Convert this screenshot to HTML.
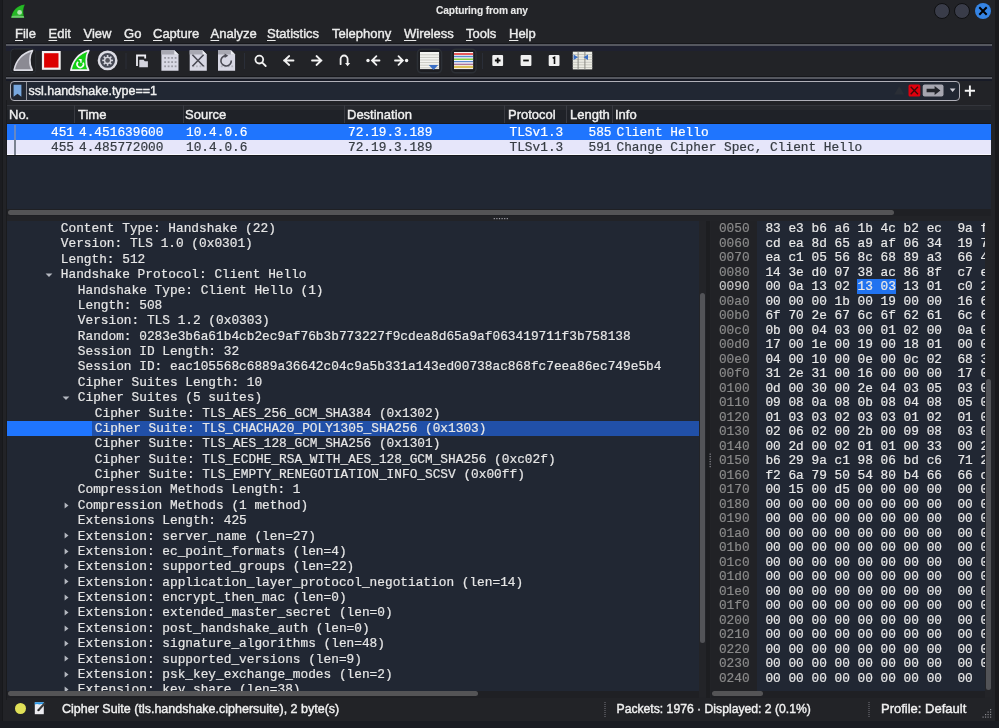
<!DOCTYPE html>
<html><head><meta charset="utf-8">
<style>
*{margin:0;padding:0;box-sizing:border-box}
html,body{width:999px;height:728px;overflow:hidden;background:#222327}
body{position:relative;will-change:transform;font-family:"Liberation Sans",sans-serif;color:#ececec;-webkit-text-stroke:0.4px currentColor}
.a{position:absolute}
.mono{font-family:"Liberation Mono",monospace;font-size:12.8px;white-space:pre;-webkit-text-stroke:0.2px currentColor}
.sans{font-family:"Liberation Sans",sans-serif;white-space:pre}
.menu span{position:absolute;top:26px;font-size:13px;line-height:16px}
.menu u{text-decoration:underline;text-decoration-thickness:1px;text-underline-offset:1.5px}
.hdr{position:absolute;top:107.4px;font-size:13px;line-height:16px;color:#f0f0f0}
.div{position:absolute;top:105px;width:1px;height:18px;background:#393b42}
.row{position:absolute;left:7px;width:984px;height:15px}
.pl{position:absolute;top:0;line-height:15px}
.tr{position:absolute;left:0;height:15.35px;line-height:15.35px}
.hx{position:absolute;left:0;height:14.51px;line-height:14.51px}
</style></head><body>
<!-- borders -->
<div class="a" style="left:0;top:0;width:2.3px;height:728px;background:#1b1c20"></div>
<div class="a" style="left:2.3px;top:0;width:0.8px;height:728px;background:#17181b"></div>
<div class="a" style="left:6.3px;top:100px;width:0.8px;height:600px;background:#1a1b1e"></div>
<div class="a" style="left:995px;top:0;width:4px;height:728px;background:#19191c"></div>

<!-- title -->
<div id="title" class="a sans" style="left:436px;top:4.2px;font-size:10.2px;font-weight:bold;line-height:14px;letter-spacing:-0.12px;-webkit-text-stroke:0.1px currentColor;color:#e8e8e8">Capturing from any</div>
<div class="a" style="left:934px;top:3px;width:16px;height:16px;border-radius:50%;background:#393c49;border:1.8px solid #0f1012"></div>
<div class="a" style="left:954px;top:3px;width:16px;height:16px;border-radius:50%;background:#393c49;border:1.8px solid #0f1012"></div>
<div class="a" style="left:975px;top:3px;width:16px;height:16px;border-radius:50%;background:#3584e4"></div>

<!-- menu -->
<div class="menu">
<span style="left:15px"><u>F</u>ile</span>
<span style="left:48.5px"><u>E</u>dit</span>
<span style="left:83.5px"><u>V</u>iew</span>
<span style="left:124px"><u>G</u>o</span>
<span style="left:153px"><u>C</u>apture</span>
<span style="left:210.5px"><u>A</u>nalyze</span>
<span style="left:267px"><u>S</u>tatistics</span>
<span style="left:332px">Telephon<u>y</u></span>
<span style="left:404px"><u>W</u>ireless</span>
<span style="left:466px"><u>T</u>ools</span>
<span style="left:509px"><u>H</u>elp</span>
</div>
<div class="a" style="left:6px;top:43px;width:986px;height:1px;background:#17181c"></div>
<div class="a" style="left:6px;top:44px;width:986px;height:2px;background:#55575f"></div>
<div class="a" style="left:6px;top:46px;width:986px;height:4.5px;background:#1f2130"></div>

<!-- toolbar -->
<svg class="a" style="left:0;top:46px" width="999" height="31" viewBox="0 46 999 31">
<!-- 1 frame + gray fin -->
<rect x="10.7" y="49" width="25" height="24" rx="3.5" fill="#1d1e22" stroke="#2c3036" stroke-width="1"/>
<path d="M14.1 70.1 C15.8 61 22 52.8 32.5 50.6 C29.6 55 28.5 64 32.4 70.1 Z" fill="#8b8a93" stroke="#dcdce4" stroke-width="1.6" stroke-linejoin="round"/>
<!-- 2 red stop -->
<rect x="43" y="52.1" width="16.6" height="16.6" fill="#dc0000" stroke="#f2f2f2" stroke-width="2.2"/>
<!-- 3 green fin with reload -->
<path d="M70.9 70.2 C72.6 61 78.8 52.8 88.8 50.6 C86 55 85 64 88.6 70.2 Z" fill="#12d012" stroke="#f0eef4" stroke-width="1.7" stroke-linejoin="round"/>
<path d="M78.2 61.8 A3.2 3.2 0 1 0 83 62.6" fill="none" stroke="#f8f8f8" stroke-width="1.6"/>
<path d="M78.4 59 L81.4 59 L81.4 62.6 Z" fill="#f8f8f8"/>
<rect x="80.4" y="59" width="1.1" height="4" fill="#f8f8f8"/>
<!-- 4 gear -->
<circle cx="107.6" cy="60.4" r="8.7" fill="#464955" stroke="#dcdce4" stroke-width="2.5"/>
<g fill="#d4d4dc">
<circle cx="107.6" cy="60.4" r="3.7"/>
<rect x="106.8" y="55" width="1.6" height="10.8"/>
<rect x="102.2" y="59.6" width="10.8" height="1.6"/>
<rect x="106.8" y="55" width="1.6" height="10.8" transform="rotate(45 107.6 60.4)"/>
<rect x="106.8" y="55" width="1.6" height="10.8" transform="rotate(-45 107.6 60.4)"/>
</g>
<circle cx="107.6" cy="60.4" r="2.3" fill="#55565e"/>
<!-- sep -->
<rect x="125.5" y="53" width="1" height="16" fill="#2a2e38"/>
<!-- 5 open -->
<path d="M137 66 V55.5 H145.2 V58.5" fill="none" stroke="#eeeef4" stroke-width="1.8"/>
<path d="M139.3 59.8 H143.6 L144.8 61.2 H147.9 V67.3 H139.3 Z" fill="#d4d4de"/>
<!-- 6-8 docs -->
<path d="M161.4 50.2 H174.3 L178.5 54.4 V70.7 H161.4 Z" fill="#d8d8e4"/>
<path d="M161.4 50.2 H174.3 L178.5 54.4 H161.4 Z" fill="#a8a8b2"/>
<path d="M174.3 50.2 L174.3 54.4 L178.5 54.4 Z" fill="#ecedf2"/>
<g fill="#9a9aa4">
<rect x="164.2" y="57" width="1.8" height="1.8"/><rect x="167.7" y="57" width="1.8" height="1.8"/><rect x="171.2" y="57" width="1.8" height="1.8"/><rect x="174.7" y="57" width="1.8" height="1.8"/>
<rect x="164.2" y="61.2" width="1.8" height="1.8"/><rect x="167.7" y="61.2" width="1.8" height="1.8"/><rect x="171.2" y="61.2" width="1.8" height="1.8"/><rect x="174.7" y="61.2" width="1.8" height="1.8"/>
<rect x="164.2" y="65.4" width="1.8" height="1.8"/><rect x="167.7" y="65.4" width="1.8" height="1.8"/><rect x="171.2" y="65.4" width="1.8" height="1.8"/><rect x="174.7" y="65.4" width="1.8" height="1.8"/>
</g>
<path d="M189.7 50.2 H202.6 L206.8 54.4 V70.7 H189.7 Z" fill="#d8d8e4"/>
<path d="M189.7 50.2 H202.6 L206.8 54.4 H189.7 Z" fill="#a8a8b2"/>
<path d="M202.6 50.2 L202.6 54.4 L206.8 54.4 Z" fill="#ecedf2"/>
<g fill="#b4b4be">
<rect x="192.5" y="65.4" width="1.8" height="1.8"/><rect x="196" y="65.4" width="1.8" height="1.8"/><rect x="199.5" y="65.4" width="1.8" height="1.8"/><rect x="203" y="65.4" width="1.8" height="1.8"/>
</g>
<path d="M192.4 54.7 L203.6 66.2 M203.6 54.7 L192.4 66.2" stroke="#4a4a54" stroke-width="1.6"/>
<path d="M218.0 50.2 H230.9 L235.1 54.4 V70.7 H218.0 Z" fill="#d8d8e4"/>
<path d="M218.0 50.2 H230.9 L235.1 54.4 H218.0 Z" fill="#a8a8b2"/>
<path d="M230.9 50.2 L230.9 54.4 L235.1 54.4 Z" fill="#ecedf2"/>
<g fill="#b4b4be">
<rect x="220.8" y="65.4" width="1.8" height="1.8"/><rect x="224.3" y="65.4" width="1.8" height="1.8"/><rect x="227.8" y="65.4" width="1.8" height="1.8"/><rect x="231.3" y="65.4" width="1.8" height="1.8"/>
</g>
<path d="M225.6 55.6 A5.2 5.2 0 1 0 231.3 60.5" fill="none" stroke="#4a4a54" stroke-width="1.6"/>
<path d="M224.6 53.6 L228.3 55.8 L224.6 58.1 Z" fill="#4a4a54"/>
<!-- sep -->
<rect x="244" y="53" width="1" height="16" fill="#2a2e38"/>
<!-- search -->
<g stroke="#f2f2f2" stroke-width="1.8" fill="none" stroke-linecap="round">
<circle cx="259.3" cy="59.6" r="3.9"/>
<path d="M262.3 62.6 L265.7 66"/>
<!-- left arrow -->
<path d="M284 60.5 H293.5 M289.2 56 L284.3 60.5 L289.2 65"/>
<!-- right arrow -->
<path d="M312 60.5 H321.5 M316.5 56 L321.3 60.5 L316.5 65"/>
<!-- jump -->
<path d="M340.6 64.2 V59 A3.5 3.5 0 0 1 347.6 59 V64"/>
<!-- first -->
<path d="M372 60.5 H379.5 M376.4 56.2 L372 60.5 L376.4 64.8"/>
<!-- last -->
<path d="M395 60.5 H402.5 M398.5 56.2 L402.8 60.5 L398.5 64.8"/>
</g>
<path d="M345 63 L350.2 63 L347.6 66.2 Z" fill="#f2f2f2"/>
<circle cx="368" cy="60.5" r="1.7" fill="#f2f2f2"/>
<circle cx="406.6" cy="60.5" r="1.7" fill="#f2f2f2"/>
<!-- frame autoscroll -->
<rect x="417.5" y="49.3" width="24" height="23.5" rx="4" fill="#1d1e22" stroke="#2c3036" stroke-width="1.6"/>
<rect x="420" y="52" width="19.1" height="17.1" fill="#f4f4f0"/>
<g fill="#cacac2">
<rect x="420" y="54.3" width="19.1" height="1"/><rect x="420" y="56.9" width="19.1" height="1"/><rect x="420" y="59.5" width="19.1" height="1"/><rect x="420" y="62.1" width="19.1" height="1"/><rect x="420" y="64.7" width="19.1" height="1"/><rect x="420" y="67.3" width="19.1" height="1"/>
</g>
<path d="M428.8 65.1 H438.2 L433.5 69.9 Z" fill="#3a6ec4"/>
<!-- frame colorize -->
<rect x="451.5" y="49.3" width="24.5" height="23.5" rx="4" fill="#1d1e22" stroke="#2c3036" stroke-width="1.6"/>
<rect x="454" y="52" width="19.1" height="17.1" fill="#f6f6f6"/>
<rect x="454" y="53" width="19.1" height="2" fill="#e85a5a"/>
<rect x="454" y="55.8" width="19.1" height="1.2" fill="#5a8cd2"/>
<rect x="454" y="57" width="19.1" height="1.2" fill="#d8d8f0"/>
<rect x="454" y="58.5" width="19.1" height="1.5" fill="#84d040"/>
<rect x="454" y="61" width="19.1" height="1.3" fill="#5a8cd2"/>
<rect x="454" y="62.3" width="19.1" height="1.2" fill="#dcdcf0"/>
<rect x="454" y="63.8" width="19.1" height="0.9" fill="#904078"/>
<rect x="454" y="65.8" width="19.1" height="2.3" fill="#dcc058"/>
<!-- sep -->
<rect x="482" y="53" width="1" height="16" fill="#2a2e38"/>
<!-- zoom boxes -->
<rect x="492.3" y="55.1" width="10.8" height="10.9" rx="1" fill="#f0f0f0"/>
<path d="M494.9 60.5 H500.5 M497.7 57.7 V63.3" stroke="#111" stroke-width="1.8"/>
<rect x="520.6" y="55.1" width="10.8" height="10.9" rx="1" fill="#f0f0f0"/>
<path d="M523.2 60.5 H528.8" stroke="#111" stroke-width="1.8"/>
<rect x="548.7" y="55.1" width="10.8" height="10.9" rx="1" fill="#f0f0f0"/>
<path d="M552.7 58.3 L554.5 57.3 V63.9" fill="none" stroke="#111" stroke-width="1.6"/>
<!-- resize -->
<rect x="572.8" y="51.7" width="19.4" height="17.7" fill="#ecece4"/>
<g fill="#c4c4bc">
<rect x="572.8" y="54" width="19.4" height="0.9"/><rect x="572.8" y="56.6" width="19.4" height="0.9"/><rect x="572.8" y="59.2" width="19.4" height="0.9"/><rect x="572.8" y="61.8" width="19.4" height="0.9"/><rect x="572.8" y="64.4" width="19.4" height="0.9"/><rect x="572.8" y="67" width="19.4" height="0.9"/>
</g>
<rect x="577.6" y="51.7" width="1" height="17.7" fill="#8a8a84"/>
<rect x="584.4" y="51.7" width="1" height="17.7" fill="#8a8a84"/>
<path d="M573.6 54.5 L578 57.2 L573.6 59.9 Z M588 54.5 L583.6 57.2 L588 59.9 Z" fill="#3a6ec4"/>
</svg>

<div class="a" style="left:6px;top:76px;width:986px;height:1px;background:#17181c"></div>
<div class="a" style="left:6px;top:77px;width:986px;height:1.8px;background:#55575f"></div>
<div class="a" style="left:6px;top:78.8px;width:986px;height:2px;background:#171a26"></div>

<!-- filter -->
<div class="a" style="left:9.5px;top:81px;width:950px;height:20px;border:1.5px solid #b0b0b8;border-radius:4px;background:#212733"></div>
<div class="a" style="left:25.6px;top:82px;width:1px;height:18px;background:#94949c"></div>
<div class="a sans" style="left:28.5px;top:84px;font-size:12.5px;line-height:14px;color:#f0f0f0">ssl.handshake.type==1</div>

<!-- packet list -->
<div class="a" style="left:7px;top:105px;width:984px;height:104px;background:#212733"></div>
<div class="a" style="left:7px;top:209px;width:984px;height:7px;background:#1f2024"></div>
<div class="a" style="left:7px;top:104.8px;width:984px;height:1px;background:#33353b"></div>
<div class="a" style="left:7px;top:105.8px;width:984px;height:4.6px;background:#26282d"></div>
<div class="a" style="left:7px;top:110.4px;width:984px;height:12.7px;background:#1f2228"></div>
<div class="a" style="left:7px;top:123.1px;width:984px;height:1.2px;background:#18191d"></div>
<div class="hdr" style="left:9px">No.</div>
<div class="hdr" style="left:78px">Time</div>
<div class="hdr" style="left:185px">Source</div>
<div class="hdr" style="left:347px">Destination</div>
<div class="hdr" style="left:508px">Protocol</div>
<div class="hdr" style="left:570px">Length</div>
<div class="hdr" style="left:615px">Info</div>
<div class="div" style="left:74.3px"></div>
<div class="div" style="left:182.5px"></div>
<div class="div" style="left:343.8px"></div>
<div class="div" style="left:504.3px"></div>
<div class="div" style="left:566.1px"></div>
<div class="div" style="left:612.4px"></div>

<div class="row" style="top:124.3px;height:15.4px;background:#1f75fe"></div>
<div class="row" style="top:139.7px;height:14.9px;background:#e6e6fa;border-bottom:1px solid #f8f8ff"></div>
<div class="a" style="left:14px;top:124.8px;width:1.6px;height:14.9px;background:#6688c4"></div>
<div class="a" style="left:14px;top:139.7px;width:1.6px;height:14.9px;background:#7a8290"></div>
<div class="a" style="left:7px;top:154.6px;width:984px;height:1.2px;background:#16181d"></div>
<div class="a mono" style="left:0.5px;top:124.8px;color:#fff">
<span class="pl" style="left:0;width:73.5px;text-align:right">451</span><span class="pl" style="left:78.5px">4.451639600</span><span class="pl" style="left:185.5px">10.4.0.6</span><span class="pl" style="left:347.5px">72.19.3.189</span><span class="pl" style="left:509px">TLSv1.3</span><span class="pl" style="left:0;width:611px;text-align:right">585</span><span class="pl" style="left:616px">Client Hello</span>
</div>
<div class="a mono" style="left:0.5px;top:139.7px;color:#353b42">
<span class="pl" style="left:0;width:73.5px;text-align:right">455</span><span class="pl" style="left:78.5px">4.485772000</span><span class="pl" style="left:185.5px">10.4.0.6</span><span class="pl" style="left:347.5px">72.19.3.189</span><span class="pl" style="left:509px">TLSv1.3</span><span class="pl" style="left:0;width:611px;text-align:right">591</span><span class="pl" style="left:616px">Change Cipher Spec, Client Hello</span>
</div>
<div class="a" style="left:8px;top:209.8px;width:886px;height:5.2px;border-radius:3px;background:#545456"></div>

<!-- splitter -->
<div class="a" style="left:7px;top:216px;width:984px;height:4.7px;background:#222327"></div>

<!-- detail pane -->
<div class="a" style="left:7px;top:220.5px;width:699px;height:476.5px;background:#232428"></div>
<div id="tree" class="a mono" style="left:7px;top:220.5px;width:692px;height:470.5px;background:#212733;overflow:hidden;color:#e6e6e6">
<div class="tr" style="left:53.8px;top:0.60px">Content Type: Handshake (22)</div>
<div class="tr" style="left:53.8px;top:15.97px">Version: TLS 1.0 (0x0301)</div>
<div class="tr" style="left:53.8px;top:31.35px">Length: 512</div>
<svg class="a" style="left:38.20px;top:52.12px" width="8" height="5" viewBox="0 0 8 5"><path d="M0.6 0.4H7.4L4 4Z" fill="#b4b8c0"/></svg>
<div class="tr" style="left:53.8px;top:46.73px">Handshake Protocol: Client Hello</div>
<div class="tr" style="left:70.8px;top:62.10px">Handshake Type: Client Hello (1)</div>
<div class="tr" style="left:70.8px;top:77.47px">Length: 508</div>
<div class="tr" style="left:70.8px;top:92.85px">Version: TLS 1.2 (0x0303)</div>
<div class="tr" style="left:70.8px;top:108.22px">Random: 0283e3b6a61b4cb2ec9af76b3b773227f9cdea8d65a9af063419711f3b758138</div>
<div class="tr" style="left:70.8px;top:123.60px">Session ID Length: 32</div>
<div class="tr" style="left:70.8px;top:138.97px">Session ID: eac105568c6889a36642c04c9a5b331a143ed00738ac868fc7eea86ec749e5b4</div>
<div class="tr" style="left:70.8px;top:154.35px">Cipher Suites Length: 10</div>
<svg class="a" style="left:55.20px;top:175.12px" width="8" height="5" viewBox="0 0 8 5"><path d="M0.6 0.4H7.4L4 4Z" fill="#b4b8c0"/></svg>
<div class="tr" style="left:70.8px;top:169.72px">Cipher Suites (5 suites)</div>
<div class="tr" style="left:87.8px;top:185.10px">Cipher Suite: TLS_AES_256_GCM_SHA384 (0x1302)</div>
<div class="a" style="left:0;top:200.47px;width:85.4px;height:15px;background:#1f75fe"></div>
<div class="a" style="left:85.4px;top:200.47px;width:607px;height:15px;background:#2150a8"></div>
<div class="tr" style="left:87.8px;top:200.47px">Cipher Suite: TLS_CHACHA20_POLY1305_SHA256 (0x1303)</div>
<div class="tr" style="left:87.8px;top:215.85px">Cipher Suite: TLS_AES_128_GCM_SHA256 (0x1301)</div>
<div class="tr" style="left:87.8px;top:231.22px">Cipher Suite: TLS_ECDHE_RSA_WITH_AES_128_GCM_SHA256 (0xc02f)</div>
<div class="tr" style="left:87.8px;top:246.60px">Cipher Suite: TLS_EMPTY_RENEGOTIATION_INFO_SCSV (0x00ff)</div>
<div class="tr" style="left:70.8px;top:261.98px">Compression Methods Length: 1</div>
<svg class="a" style="left:56.70px;top:281.05px" width="5" height="8" viewBox="0 0 5 8"><path d="M0.6 0.4V6.6L4.5 3.5Z" fill="#b4b8c0"/></svg>
<div class="tr" style="left:70.8px;top:277.35px">Compression Methods (1 method)</div>
<div class="tr" style="left:70.8px;top:292.73px">Extensions Length: 425</div>
<svg class="a" style="left:56.70px;top:311.80px" width="5" height="8" viewBox="0 0 5 8"><path d="M0.6 0.4V6.6L4.5 3.5Z" fill="#b4b8c0"/></svg>
<div class="tr" style="left:70.8px;top:308.10px">Extension: server_name (len=27)</div>
<svg class="a" style="left:56.70px;top:327.18px" width="5" height="8" viewBox="0 0 5 8"><path d="M0.6 0.4V6.6L4.5 3.5Z" fill="#b4b8c0"/></svg>
<div class="tr" style="left:70.8px;top:323.48px">Extension: ec_point_formats (len=4)</div>
<svg class="a" style="left:56.70px;top:342.55px" width="5" height="8" viewBox="0 0 5 8"><path d="M0.6 0.4V6.6L4.5 3.5Z" fill="#b4b8c0"/></svg>
<div class="tr" style="left:70.8px;top:338.85px">Extension: supported_groups (len=22)</div>
<svg class="a" style="left:56.70px;top:357.93px" width="5" height="8" viewBox="0 0 5 8"><path d="M0.6 0.4V6.6L4.5 3.5Z" fill="#b4b8c0"/></svg>
<div class="tr" style="left:70.8px;top:354.23px">Extension: application_layer_protocol_negotiation (len=14)</div>
<svg class="a" style="left:56.70px;top:373.30px" width="5" height="8" viewBox="0 0 5 8"><path d="M0.6 0.4V6.6L4.5 3.5Z" fill="#b4b8c0"/></svg>
<div class="tr" style="left:70.8px;top:369.60px">Extension: encrypt_then_mac (len=0)</div>
<svg class="a" style="left:56.70px;top:388.68px" width="5" height="8" viewBox="0 0 5 8"><path d="M0.6 0.4V6.6L4.5 3.5Z" fill="#b4b8c0"/></svg>
<div class="tr" style="left:70.8px;top:384.98px">Extension: extended_master_secret (len=0)</div>
<svg class="a" style="left:56.70px;top:404.05px" width="5" height="8" viewBox="0 0 5 8"><path d="M0.6 0.4V6.6L4.5 3.5Z" fill="#b4b8c0"/></svg>
<div class="tr" style="left:70.8px;top:400.35px">Extension: post_handshake_auth (len=0)</div>
<svg class="a" style="left:56.70px;top:419.43px" width="5" height="8" viewBox="0 0 5 8"><path d="M0.6 0.4V6.6L4.5 3.5Z" fill="#b4b8c0"/></svg>
<div class="tr" style="left:70.8px;top:415.73px">Extension: signature_algorithms (len=48)</div>
<svg class="a" style="left:56.70px;top:434.80px" width="5" height="8" viewBox="0 0 5 8"><path d="M0.6 0.4V6.6L4.5 3.5Z" fill="#b4b8c0"/></svg>
<div class="tr" style="left:70.8px;top:431.10px">Extension: supported_versions (len=9)</div>
<svg class="a" style="left:56.70px;top:450.18px" width="5" height="8" viewBox="0 0 5 8"><path d="M0.6 0.4V6.6L4.5 3.5Z" fill="#b4b8c0"/></svg>
<div class="tr" style="left:70.8px;top:446.48px">Extension: psk_key_exchange_modes (len=2)</div>
<svg class="a" style="left:56.70px;top:465.55px" width="5" height="8" viewBox="0 0 5 8"><path d="M0.6 0.4V6.6L4.5 3.5Z" fill="#b4b8c0"/></svg>
<div class="tr" style="left:70.8px;top:461.85px">Extension: key_share (len=38)</div>
</div>
<div class="a" style="left:700px;top:292.5px;width:5px;height:350px;border-radius:3px;background:#525357"></div>
<div class="a" style="left:7px;top:690.6px;width:692px;height:7px;background:#1f2024"></div>
<div class="a" style="left:8px;top:691.1px;width:470px;height:5.4px;border-radius:3px;background:#545456"></div>

<!-- hex pane -->
<div class="a" style="left:706.3px;top:220.5px;width:4.2px;height:477px;background:#1d1e21"></div>
<div class="a" style="left:710.5px;top:220.5px;width:281px;height:476.5px;background:#232428"></div>
<div id="hexoff" class="a mono" style="left:710.5px;top:220.5px;width:46.5px;height:470.5px;background:#212226;overflow:hidden;color:#8a8a8a">
<div class="hx" style="left:8.4px;top:1.60px;color:#8a8a8a">0050</div>
<div class="hx" style="left:8.4px;top:16.11px;color:#8a8a8a">0060</div>
<div class="hx" style="left:8.4px;top:30.62px;color:#8a8a8a">0070</div>
<div class="hx" style="left:8.4px;top:45.13px;color:#8a8a8a">0080</div>
<div class="hx" style="left:8.4px;top:59.64px;color:#c4c4c4">0090</div>
<div class="hx" style="left:8.4px;top:74.15px;color:#8a8a8a">00a0</div>
<div class="hx" style="left:8.4px;top:88.66px;color:#8a8a8a">00b0</div>
<div class="hx" style="left:8.4px;top:103.17px;color:#8a8a8a">00c0</div>
<div class="hx" style="left:8.4px;top:117.68px;color:#8a8a8a">00d0</div>
<div class="hx" style="left:8.4px;top:132.19px;color:#8a8a8a">00e0</div>
<div class="hx" style="left:8.4px;top:146.70px;color:#8a8a8a">00f0</div>
<div class="hx" style="left:8.4px;top:161.21px;color:#8a8a8a">0100</div>
<div class="hx" style="left:8.4px;top:175.72px;color:#8a8a8a">0110</div>
<div class="hx" style="left:8.4px;top:190.23px;color:#8a8a8a">0120</div>
<div class="hx" style="left:8.4px;top:204.74px;color:#8a8a8a">0130</div>
<div class="hx" style="left:8.4px;top:219.25px;color:#8a8a8a">0140</div>
<div class="hx" style="left:8.4px;top:233.76px;color:#8a8a8a">0150</div>
<div class="hx" style="left:8.4px;top:248.27px;color:#8a8a8a">0160</div>
<div class="hx" style="left:8.4px;top:262.78px;color:#8a8a8a">0170</div>
<div class="hx" style="left:8.4px;top:277.29px;color:#8a8a8a">0180</div>
<div class="hx" style="left:8.4px;top:291.80px;color:#8a8a8a">0190</div>
<div class="hx" style="left:8.4px;top:306.31px;color:#8a8a8a">01a0</div>
<div class="hx" style="left:8.4px;top:320.82px;color:#8a8a8a">01b0</div>
<div class="hx" style="left:8.4px;top:335.33px;color:#8a8a8a">01c0</div>
<div class="hx" style="left:8.4px;top:349.84px;color:#8a8a8a">01d0</div>
<div class="hx" style="left:8.4px;top:364.35px;color:#8a8a8a">01e0</div>
<div class="hx" style="left:8.4px;top:378.86px;color:#8a8a8a">01f0</div>
<div class="hx" style="left:8.4px;top:393.37px;color:#8a8a8a">0200</div>
<div class="hx" style="left:8.4px;top:407.88px;color:#8a8a8a">0210</div>
<div class="hx" style="left:8.4px;top:422.39px;color:#8a8a8a">0220</div>
<div class="hx" style="left:8.4px;top:436.90px;color:#8a8a8a">0230</div>
<div class="hx" style="left:8.4px;top:451.41px;color:#8a8a8a">0240</div>
</div><!--hexoff-->
<div id="hex" class="a mono" style="left:757px;top:220.5px;width:228px;height:470.5px;background:#212733;overflow:hidden;color:#e8e8e8">
<div class="hx" style="left:8.4px;top:1.60px">83 e3 b6 a6 1b 4c b2 ec  9a f</div>
<div class="hx" style="left:8.4px;top:16.11px">cd ea 8d 65 a9 af 06 34  19 7</div>
<div class="hx" style="left:8.4px;top:30.62px">ea c1 05 56 8c 68 89 a3  66 4</div>
<div class="hx" style="left:8.4px;top:45.13px">14 3e d0 07 38 ac 86 8f  c7 e</div>
<div class="a" style="left:100px;top:58.64px;width:38.6px;height:15.3px;background:#2173f0"></div>
<div class="hx" style="left:8.4px;top:59.64px">00 0a 13 02 13 03 13 01  c0 2</div>
<div class="hx" style="left:8.4px;top:74.15px">00 00 00 1b 00 19 00 00  16 6</div>
<div class="hx" style="left:8.4px;top:88.66px">6f 70 2e 67 6c 6f 62 61  6c 6</div>
<div class="hx" style="left:8.4px;top:103.17px">0b 00 04 03 00 01 02 00  0a 0</div>
<div class="hx" style="left:8.4px;top:117.68px">17 00 1e 00 19 00 18 01  00 0</div>
<div class="hx" style="left:8.4px;top:132.19px">04 00 10 00 0e 00 0c 02  68 3</div>
<div class="hx" style="left:8.4px;top:146.70px">31 2e 31 00 16 00 00 00  17 0</div>
<div class="hx" style="left:8.4px;top:161.21px">0d 00 30 00 2e 04 03 05  03 0</div>
<div class="hx" style="left:8.4px;top:175.72px">09 08 0a 08 0b 08 04 08  05 0</div>
<div class="hx" style="left:8.4px;top:190.23px">01 03 03 02 03 03 01 02  01 0</div>
<div class="hx" style="left:8.4px;top:204.74px">02 06 02 00 2b 00 09 08  03 0</div>
<div class="hx" style="left:8.4px;top:219.25px">00 2d 00 02 01 01 00 33  00 2</div>
<div class="hx" style="left:8.4px;top:233.76px">b6 29 9a c1 98 06 bd c6  71 2</div>
<div class="hx" style="left:8.4px;top:248.27px">f2 6a 79 50 54 80 b4 66  66 c</div>
<div class="hx" style="left:8.4px;top:262.78px">00 15 00 d5 00 00 00 00  00 0</div>
<div class="hx" style="left:8.4px;top:277.29px">00 00 00 00 00 00 00 00  00 0</div>
<div class="hx" style="left:8.4px;top:291.80px">00 00 00 00 00 00 00 00  00 0</div>
<div class="hx" style="left:8.4px;top:306.31px">00 00 00 00 00 00 00 00  00 0</div>
<div class="hx" style="left:8.4px;top:320.82px">00 00 00 00 00 00 00 00  00 0</div>
<div class="hx" style="left:8.4px;top:335.33px">00 00 00 00 00 00 00 00  00 0</div>
<div class="hx" style="left:8.4px;top:349.84px">00 00 00 00 00 00 00 00  00 0</div>
<div class="hx" style="left:8.4px;top:364.35px">00 00 00 00 00 00 00 00  00 0</div>
<div class="hx" style="left:8.4px;top:378.86px">00 00 00 00 00 00 00 00  00 0</div>
<div class="hx" style="left:8.4px;top:393.37px">00 00 00 00 00 00 00 00  00 0</div>
<div class="hx" style="left:8.4px;top:407.88px">00 00 00 00 00 00 00 00  00 0</div>
<div class="hx" style="left:8.4px;top:422.39px">00 00 00 00 00 00 00 00  00 0</div>
<div class="hx" style="left:8.4px;top:436.90px">00 00 00 00 00 00 00 00  00 0</div>
<div class="hx" style="left:8.4px;top:451.41px">00 00 00 00 00 00 00 00  00</div>
</div><!--hex-->
<div class="a" style="left:985.5px;top:379px;width:5px;height:310.5px;border-radius:3px;background:#525357"></div>
<div class="a" style="left:710.5px;top:690.6px;width:274.5px;height:7px;background:#1f2024"></div>
<div class="a" style="left:712px;top:691.1px;width:51px;height:5.4px;border-radius:3px;background:#545456"></div>

<!-- status -->
<div class="a" style="left:0;top:721px;width:999px;height:7px;background:#1a1c22"></div>
<div class="a" style="left:15px;top:703px;width:11px;height:11px;border-radius:50%;background:#e0e058"></div>
<div class="a sans" style="left:62px;top:702px;font-size:12.5px;line-height:14px;color:#f0f0f0">Cipher Suite (tls.handshake.ciphersuite), 2 byte(s)</div>
<div class="a sans" style="left:616.5px;top:702px;font-size:12.2px;line-height:14px;color:#f0f0f0">Packets: 1976 · Displayed: 2 (0.1%)</div>
<div class="a sans" style="left:881px;top:702px;font-size:13px;line-height:14px;color:#f0f0f0">Profile: Default</div>

<!-- title icon -->
<svg class="a" style="left:10px;top:3px" width="17" height="17" viewBox="10 3 17 17">
<path d="M11.2 17.7 C12.3 10.5 17 5.5 24.9 4.4 C23 8 22.6 13 24.2 17.7 Z" fill="#1aa01a"/>
<path d="M11.8 17 C12.9 11 17.2 6.3 24 5.1 C22.6 8.5 22.3 12.5 23.3 15 Q17 14.8 11.8 17Z" fill="#26b826"/>
<path d="M11.3 17.7 L11.8 16 Q18 15.2 23.7 16 L24.2 17.7 Z" fill="#70c870"/>
<circle cx="19.6" cy="12.4" r="2.4" fill="#b0e0b0"/>
</svg>
<!-- close X -->
<svg class="a" style="left:975px;top:3px" width="16" height="16" viewBox="0 0 16 16">
<path d="M5 5 L11 11 M11 5 L5 11" stroke="#000" stroke-width="2" stroke-linecap="square"/>
</svg>
<!-- bookmark -->
<svg class="a" style="left:13px;top:84px" width="10" height="14" viewBox="0 0 10 14">
<path d="M0.6 0.8 H8.4 V12.7 L4.5 9.8 L0.6 12.7 Z" fill="#78a8e0"/>
</svg>
<!-- filter right icons -->
<svg class="a" style="left:890px;top:80px" width="90" height="22" viewBox="890 80 90 22">
<path d="M899.2 86.3 L904.2 94.6 H894.2 Z" fill="#2a2e36"/>
<rect x="908.5" y="84.5" width="11.8" height="12" rx="1.5" fill="#e0000e"/>
<path d="M910.7 86.8 L918 94.3 M918 86.8 L910.7 94.3" stroke="#3a0a0a" stroke-width="1.3"/>
<rect x="922.7" y="84.5" width="20.8" height="12" rx="2" fill="#a6a6b0"/>
<path d="M926.6 88.8 H934.6 V85.9 L940.4 90.5 L934.6 95.1 V92.2 H926.6 Z" fill="#22242a"/>
<path d="M949.8 88.5 H955.5 L952.65 92 Z" fill="#d0d0d8"/>
<path d="M964.8 90.8 H975 M969.9 85.5 V96.2" stroke="#f4f4f4" stroke-width="1.9"/>
</svg>
<!-- splitter dots -->
<svg class="a" style="left:493px;top:216px" width="16" height="5" viewBox="0 0 16 5">
<g fill="#a0a0a8"><rect x="0.70" y="2" width="1.2" height="1.2"/><rect x="3.30" y="2" width="1.2" height="1.2"/><rect x="5.90" y="2" width="1.2" height="1.2"/><rect x="8.50" y="2" width="1.2" height="1.2"/><rect x="11.10" y="2" width="1.2" height="1.2"/><rect x="13.70" y="2" width="1.2" height="1.2"/></g>
</svg>
<svg class="a" style="left:707.5px;top:453px" width="4" height="16" viewBox="0 0 4 16">
<g fill="#a4a4ac"><rect x="1.6" y="0.6" width="1.1" height="1.1"/><rect x="1.6" y="3.1" width="1.1" height="1.1"/><rect x="1.6" y="5.6" width="1.1" height="1.1"/><rect x="1.6" y="8.1" width="1.1" height="1.1"/><rect x="1.6" y="10.6" width="1.1" height="1.1"/><rect x="1.6" y="13.1" width="1.1" height="1.1"/></g>
</svg>
<!-- status edit icon -->
<svg class="a" style="left:34px;top:701px" width="14" height="15" viewBox="34 701 14 15">
<rect x="34.8" y="702.2" width="9" height="12" fill="#ececf0"/>
<path d="M34.8 702.2 H43.8 V704.5 Q41 703.6 39.5 704.6 Q37 703.5 34.8 704.6 Z" fill="#2a98e8"/>
<path d="M38.4 710.2 L45 703" stroke="#3a3a3a" stroke-width="2"/>
<circle cx="38.3" cy="710.3" r="1" fill="#222"/>
</svg>
<!-- status separators -->
<svg class="a" style="left:603px;top:701px" width="4" height="17" viewBox="0 0 4 17">
<g fill="#77777e"><rect x="1.5" y="1" width="1" height="1"/><rect x="1.5" y="3" width="1" height="1"/><rect x="1.5" y="5" width="1" height="1"/><rect x="1.5" y="7" width="1" height="1"/><rect x="1.5" y="9" width="1" height="1"/><rect x="1.5" y="11" width="1" height="1"/><rect x="1.5" y="13" width="1" height="1"/><rect x="1.5" y="15" width="1" height="1"/></g>
</svg>
<svg class="a" style="left:867px;top:701px" width="4" height="17" viewBox="0 0 4 17">
<g fill="#77777e"><rect x="1.5" y="1" width="1" height="1"/><rect x="1.5" y="3" width="1" height="1"/><rect x="1.5" y="5" width="1" height="1"/><rect x="1.5" y="7" width="1" height="1"/><rect x="1.5" y="9" width="1" height="1"/><rect x="1.5" y="11" width="1" height="1"/><rect x="1.5" y="13" width="1" height="1"/><rect x="1.5" y="15" width="1" height="1"/></g>
</svg>
<!-- grip -->
<svg class="a" style="left:981px;top:708px" width="12" height="12" viewBox="0 0 12 12">
<g fill="#88888e"><rect x="9" y="1" width="1.2" height="1.2"/><rect x="6.5" y="3.5" width="1.2" height="1.2"/><rect x="9" y="3.5" width="1.2" height="1.2"/><rect x="4" y="6" width="1.2" height="1.2"/><rect x="6.5" y="6" width="1.2" height="1.2"/><rect x="9" y="6" width="1.2" height="1.2"/><rect x="1.5" y="8.5" width="1.2" height="1.2"/><rect x="4" y="8.5" width="1.2" height="1.2"/><rect x="6.5" y="8.5" width="1.2" height="1.2"/><rect x="9" y="8.5" width="1.2" height="1.2"/></g>
</svg>

</body></html>
